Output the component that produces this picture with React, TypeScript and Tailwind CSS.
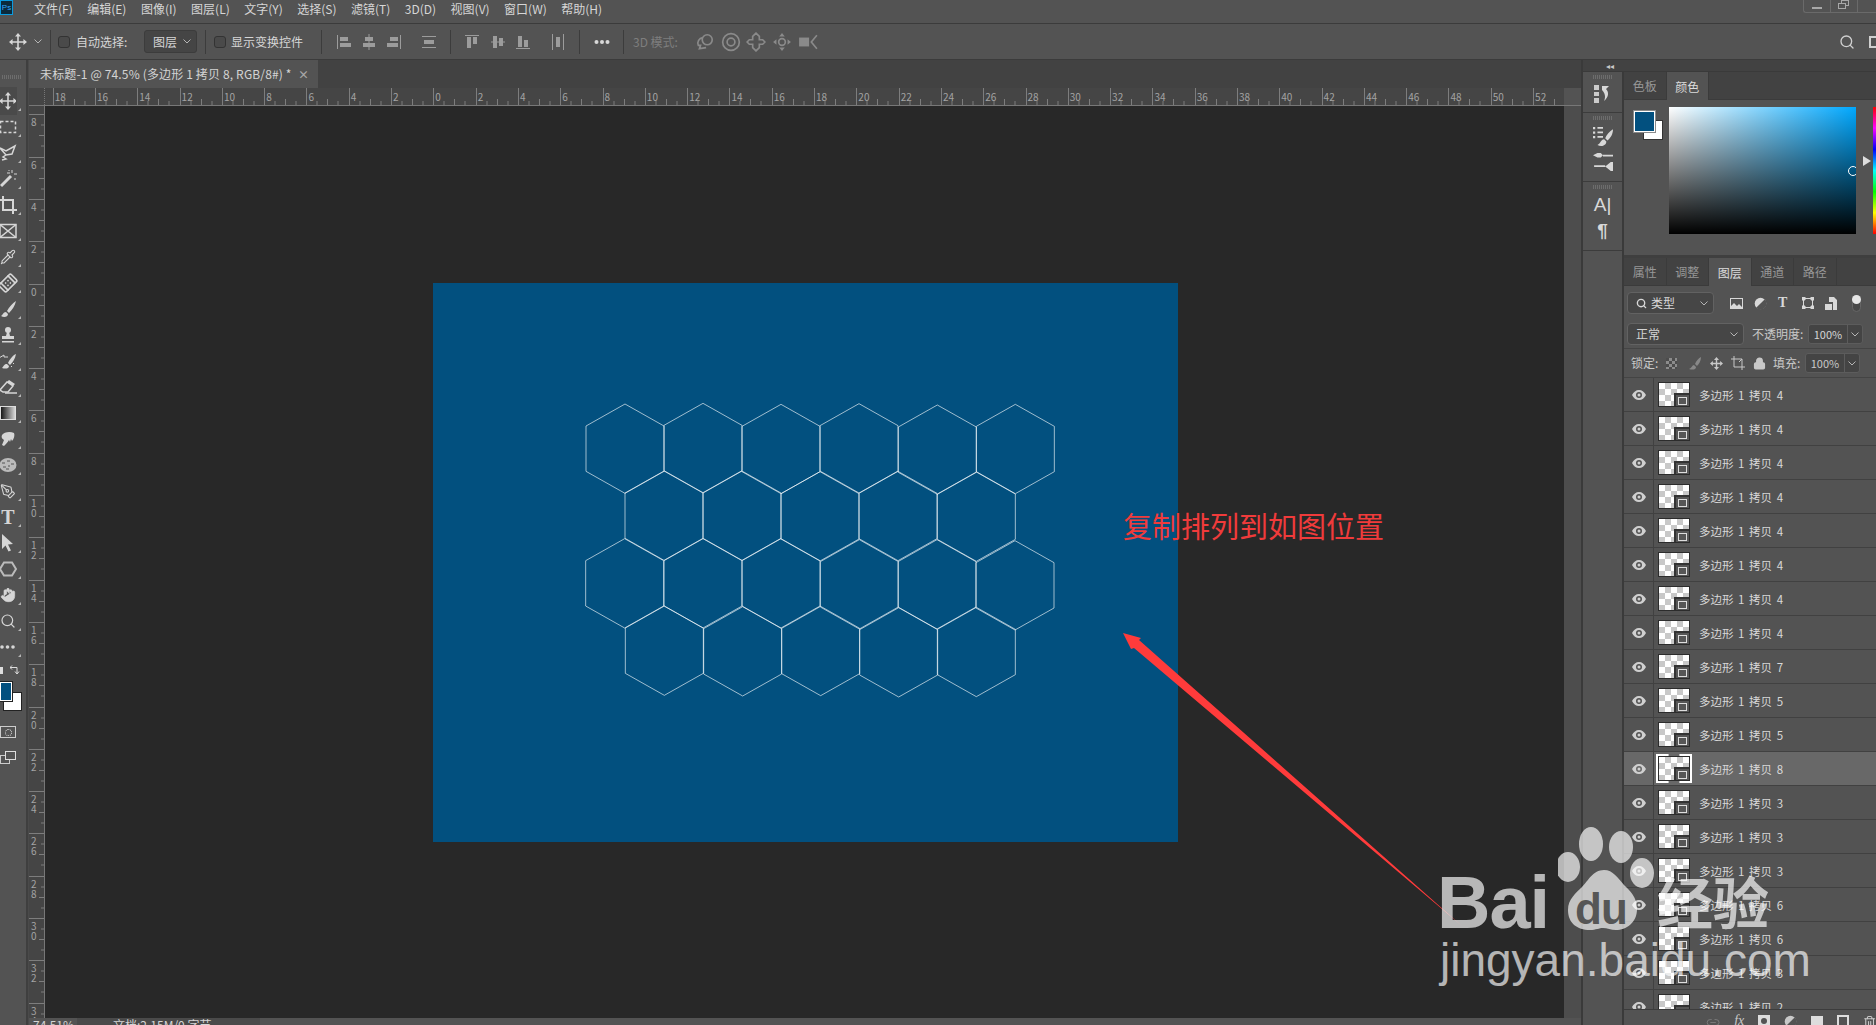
import type { ReactNode } from "react";
import { Bandage, Hand, Lock, PenTool, Pipette, Search, Trash2, Link2 } from "lucide-react";

const menus = ["文件(F)", "编辑(E)", "图像(I)", "图层(L)", "文字(Y)", "选择(S)", "滤镜(T)", "3D(D)", "视图(V)", "窗口(W)", "帮助(H)"];
const rulerTop = [18, 16, 14, 12, 10, 8, 6, 4, 2, 0, 2, 4, 6, 8, 10, 12, 14, 16, 18, 20, 22, 24, 26, 28, 30, 32, 34, 36, 38, 40, 42, 44, 46, 48, 50, 52];
const rulerLeft = [8, 6, 4, 2, 0, 2, 4, 6, 8, 10, 12, 14, 16, 18, 20, 22, 24, 26, 28, 30, 32, 34];
const layers = ["4", "4", "4", "4", "4", "4", "4", "4", "7", "5", "5", "8", "3", "3", "3", "6", "6", "3", "2"];

// vertex coordinates read off the reference, in 3x space
const hexTops = [
    [165, 42], [399, 40], [633, 43], [867, 41], [1102, 45], [1336, 43],
    [282, 243], [516, 243], [750, 245], [984, 244], [1219, 246],
    [164, 446], [399, 446], [633, 446], [868, 449], [1101, 449], [1335, 452],
    [283, 648], [518, 650], [752, 649], [986, 653], [1219, 652],
];

function Ico({ size = 18, box = 18, children }: { size?: number; box?: number; children: ReactNode }) {
    return (
        <svg width={size} height={size} viewBox={`0 0 ${box} ${box}`} fill="currentColor" className="shrink-0">
            {children}
        </svg>
    );
}

function MoveIcon() {
    return (
        <Ico>
            <path d="M9 3v12M3 9h12" stroke="currentColor" strokeWidth="1.6" fill="none" />
            <path d="M9 0l3 3.6H6zM9 18l3-3.6H6zM0 9l3.6-3v6zM18 9l-3.6-3v6z" />
        </Ico>
    );
}

const stroke = { fill: "none", stroke: "currentColor", strokeWidth: 1.5 };

const tools: ReactNode[] = [
    <MoveIcon />,
    <Ico><rect x="1.5" y="3.5" width="15" height="11" {...stroke} strokeDasharray="3 2" /></Ico>,
    <Ico><path d="M1 4l6 3 9-5-3 8-6 1zM7 11l-3 2 3 2-4 1" {...stroke} /></Ico>,
    <Ico><path d="M2 16L12 6" stroke="currentColor" strokeWidth="3" /><path d="M13 0v3M15 4h3M8 3h3M16 8v2M10 0v1" stroke="currentColor" strokeWidth="1" /></Ico>,
    <Ico><path d="M4 0v14h14M1 4h13v14" stroke="currentColor" strokeWidth="2" fill="none" /></Ico>,
    <Ico><rect x="1" y="2.5" width="16" height="13" {...stroke} /><path d="M1 2.5l16 13M17 2.5l-16 13" {...stroke} /></Ico>,
    <Pipette size={18} strokeWidth={1.6} />,
    <Bandage size={20} strokeWidth={2} className="-rotate-45 shrink-0" />,
    <Ico><path d="M17 1c-3 2-7 6-9 10l2 2c3-3 6-7 7-12zM7 12c-3 0-3 3-5 4 3 2 7 1 7-2z" /></Ico>,
    <Ico><circle cx="9" cy="4" r="3" /><path d="M8 6h2l1 4h4v3H3v-3h4zM3 15h12v1.5H3z" /></Ico>,
    <Ico><path d="M17 2c-3 1-6 5-8 9l2 2c3-3 5-6 6-11zM8 12c-3 0-3 2-5 4 3 1 7 1 7-2z" /><path d="M0 6l5-3v2h4M14 11l1 1M12 14l1 1" stroke="currentColor" strokeWidth="1" fill="none" /></Ico>,
    <Ico><path d="M1 12l7-8 6 4-5 6H4z" {...stroke} /><path d="M8 4l2-2 6 4-2 2z" /><path d="M6 15h12" stroke="currentColor" strokeWidth="1.5" /></Ico>,
    <svg width="16" height="14" viewBox="0 0 16 14" className="shrink-0">
        <defs>
            <linearGradient id="toolGrad">
                <stop offset="0" stopColor="#111" />
                <stop offset="1" stopColor="#ddd" />
            </linearGradient>
        </defs>
        <rect x="0.5" y="0.5" width="15" height="13" fill="url(#toolGrad)" stroke="#ddd" />
    </svg>,
    <Ico><path d="M3 5c2-3 8-4 12-2 1 2 0 6-2 8l-1-2-1 3-1-2c-1 2-3 4-5 6l-2-1 2-5C3 9 2 7 3 5z" /></Ico>,
    <Ico><ellipse cx="9" cy="9" rx="8.500" ry="7" fill="currentColor" opacity="0.8" /><path d="M3 7h3M8 5h3M12 8h3M4 11h3M9 10h2M7 13h3" stroke="#555" strokeWidth="1" /></Ico>,
    <PenTool size={17} strokeWidth={1.6} />,
    <span className="font-['Liberation_Serif',serif] font-bold text-[20px] leading-none">T</span>,
    <Ico><path d="M3 0l11 10-5 .5 3 6-2.5 1-3-6L3 15z" /></Ico>,
    <Ico><path d="M5 2.5h8L17 9l-4 6.5H5L1 9z" stroke="currentColor" strokeWidth="2" fill="none" opacity="0.8" /></Ico>,
    <Hand size={18} fill="currentColor" strokeWidth={1} />,
    <Search size={18} strokeWidth={1.8} />,
    <Ico><circle cx="3" cy="9" r="1.8" /><circle cx="8.5" cy="9" r="1.8" /><circle cx="14" cy="9" r="1.8" /></Ico>,
];

function AlignBar({ d }: { d: string }) {
    return (
        <svg width="14" height="18" viewBox="0 0 14 18" className="shrink-0 text-[#9c9c9c]" fill="currentColor">
            <path d={d} />
        </svg>
    );
}

function Sep({ className }: { className: string }) {
    return <div className={`w-px h-[24px] bg-[#3c3c3c] shrink-0 ${className}`} />;
}

function Chevron() {
    return (
        <svg width="8" height="5" viewBox="0 0 8 5" className="shrink-0 text-[#b5b5b5]" fill="none" stroke="currentColor">
            <path d="M.5.5L4 4 7.5.5" />
        </svg>
    );
}

function OptionsBar() {
    return (
        <div className="h-[36px] flex items-center bg-[#535353] border-b border-[#3b3b3b] text-[12px] text-[#d6d6d6] overflow-hidden">
            <div className="ml-[9px] text-[#d8d8d8]"><MoveIcon /></div>
            <div className="ml-[7px]"><Chevron /></div>
            <Sep className="ml-[8px]" />
            <div className="ml-[7px] w-[12px] h-[12px] rounded-[3px] border border-[#333] bg-[#4a4a4a] shrink-0" />
            <span className="ml-[6px] w-[54px] shrink-0">自动选择:</span>
            <div className="ml-[14px] w-[53px] h-[23px] rounded-[3px] border border-[#3c3c3c] bg-[#454545] flex items-center justify-between pl-[8px] pr-[5px] shrink-0">
                <span>图层</span>
                <Chevron />
            </div>
            <Sep className="ml-[8px]" />
            <div className="ml-[8px] w-[12px] h-[12px] rounded-[3px] border border-[#333] bg-[#4a4a4a] shrink-0" />
            <span className="ml-[5px] w-[72px] shrink-0">显示变换控件</span>
            <Sep className="ml-[18px]" />
            <div className="ml-[15px]"><AlignBar d="M0 2h1v14H0zM3 4h8v4H3zM3 10h11v4H3z" /></div>
            <div className="ml-[11px]"><AlignBar d="M6.5 1h1v16h-1zM3 4h8v4H3zM1 10h12v4H1z" /></div>
            <div className="ml-[11px]"><AlignBar d="M13 2h1v14h-1zM3 4h8v4H3zM0 10h11v4H0z" /></div>
            <div className="ml-[21px]"><AlignBar d="M0 3h14v1H0zM0 14h14v1H0zM2 7h10v4H2z" /></div>
            <Sep className="ml-[14px]" />
            <div className="ml-[14px]"><AlignBar d="M0 2h14v1H0zM2 4h4v11H2zM8 4h4v7H8z" /></div>
            <div className="ml-[12px]"><AlignBar d="M0 8.5h14v1H0zM2 3h4v12H2zM8 5h4v8H8z" /></div>
            <div className="ml-[11px]"><AlignBar d="M0 15h14v1H0zM2 3h4v11H2zM8 7h4v7H8z" /></div>
            <div className="ml-[21px]"><AlignBar d="M1 1h1v16H1zM12 1h1v16h-1zM5 4h4v10H5z" /></div>
            <Sep className="ml-[14px]" />
            <svg width="16" height="6" viewBox="0 0 16 6" className="ml-[14px] shrink-0 text-[#d8d8d8]" fill="currentColor">
                <circle cx="2.5" cy="3" r="2" /><circle cx="8" cy="3" r="2" /><circle cx="13.5" cy="3" r="2" />
            </svg>
            <Sep className="ml-[13px]" />
            <span className="ml-[9px] w-[47px] shrink-0 text-[#7e7e7e] whitespace-nowrap">3D 模式:</span>
            <div className="ml-[15px] text-[#8a8a8a] flex items-center">
                <Ico size={20}><circle cx="11" cy="7" r="4.5" {...stroke} /><path d="M7 5a5 5 0 0 0-4 7h2l-1 3 6-1" {...stroke} /></Ico>
                <div className="ml-[6px]"><Ico size={20}><circle cx="9" cy="9" r="7.5" {...stroke} /><circle cx="9" cy="9" r="3.5" {...stroke} /></Ico></div>
                <div className="ml-[5px]"><Ico size={20}><path d="M9 1l3 3v3h3l2 2-2 2h-3v3l-3 3-3-3v-3H3L1 9l2-2h3V4z" {...stroke} /></Ico></div>
                <div className="ml-[6px]"><Ico size={20}><path d="M9 1l2.5 3h-5zM9 17l2.5-3h-5zM1 9l3-2.5v5zM17 9l-3-2.5v5z" /><circle cx="9" cy="9" r="3" {...stroke} /></Ico></div>
                <div className="ml-[6px]"><Ico size={20}><rect x="1" y="5" width="9" height="8" /><path d="M17 3l-5 6 5 6" {...stroke} /></Ico></div>
            </div>
            <div className="ml-auto flex items-center text-[#d0d0d0]">
                <Search size={16} strokeWidth={2} />
                <div className="ml-[14px] w-[12px] h-[12px] mr-[-5px] border-2 border-[#d0d0d0] shrink-0" />
            </div>
        </div>
    );
}

function RulerTicks({ vertical }: { vertical?: boolean }) {
    // one 42.3px division: long line, three short marks
    return vertical ? (
        <svg width="16" height="42.3" className="absolute left-0 top-0">
            <path d="M0 .5H16M12 11H16M10 21.5H16M12 32H16" stroke="#7d7d7d" fill="none" />
        </svg>
    ) : (
        <svg width="42.3" height="17" className="absolute left-0 top-0">
            <path d="M.5 0V17M11 13V17M21.5 11V17M32 13V17" stroke="#7d7d7d" fill="none" />
        </svg>
    );
}

function TopRuler() {
    return (
        <div className="h-[18px] flex bg-[#454545] border-b border-[#777] overflow-hidden">
            <div className="w-[16px] shrink-0 border-r border-[#777] border-dotted" />
            <div className="w-[1519px] flex overflow-hidden pl-[7.7px] shrink-0">
                {rulerTop.map((n, i) => (
                    <div key={i} className="relative w-[42.3px] h-[17px] shrink-0 pl-[2px] text-[10px] leading-[18px] text-[#a3a3a3]">
                        <RulerTicks />
                        {n}
                    </div>
                ))}
            </div>
            <div className="flex-1 bg-[#535353]" />
        </div>
    );
}

function LeftRuler() {
    return (
        <div className="w-[16px] shrink-0 bg-[#454545] border-r border-[#777] overflow-hidden pt-[8.4px]">
            {rulerLeft.map((n, i) => (
                <div key={i} className="relative h-[42.3px] pt-[3px] pl-[2px] text-[10px] leading-[10px] text-[#a3a3a3]">
                    <RulerTicks vertical />
                    {String(n).split("").map((c, j) => <div key={j}>{c}</div>)}
                </div>
            ))}
        </div>
    );
}

function Toolbar() {
    return (
        <div className="w-[26px] shrink-0 bg-[#535353] flex flex-col overflow-hidden text-[#d6d6d6]">
            <div className="h-[28px] shrink-0 pt-[15px] pl-[2px]">
                <div className="h-[4px] w-[20px] bg-[repeating-linear-gradient(to_right,#6d6d6d_0_1px,transparent_1px_2px)]" />
            </div>
            {tools.map((icon, i) => (
                <div key={i} className={`relative h-[26px] flex items-center w-[16px] justify-center shrink-0 ${i === 0 ? "bg-[#4a4a4a] outline outline-[#4a4a4a]" : ""}`}>
                    {icon}
                    <span className="absolute left-[18px] bottom-[3px] w-0 h-0 border-l-[3px] border-l-transparent border-b-[3px] border-b-[#b5b5b5]" />
                </div>
            ))}
            <div className="relative h-[66px] shrink-0">
                <span className="absolute left-0 top-[7px] w-[3px] h-[7px] bg-[#ddd]" />
                <svg width="10" height="10" viewBox="0 0 10 10" className="absolute left-[10px] top-[5px]" fill="none" stroke="#ddd">
                    <path d="M0 2.500h7v6M5 6.500l2 2.500 2-2.500M2 .5L0 2.500l2 2" />
                </svg>
                <span className="absolute left-[3px] top-[32px] w-[19px] h-[19px] bg-white border border-[#222]" />
                <span className="absolute left-0 top-[22px] w-[12px] h-[19px] bg-[#02507f] border border-white outline outline-[#222]" />
            </div>
            <div className="h-[25px] shrink-0 flex items-start">
                <div className="w-[16px] h-[12px] border border-[#ccc] flex items-center justify-center">
                    <span className="w-[7px] h-[7px] rounded-full border border-dotted border-[#ddd]" />
                </div>
            </div>
            <div className="relative h-[16px] shrink-0">
                <span className="absolute left-0 top-[4px] w-[10px] h-[9px] border border-[#ccc]" />
                <span className="absolute left-[5px] top-0 w-[11px] h-[9px] border border-[#ddd] bg-[#535353]" />
            </div>
        </div>
    );
}

function Canvas() {
    return (
        <div className="w-[1519px] shrink-0 bg-[#282828] flex items-center justify-center pl-[2px] pt-px">
            <div className="w-[745px] h-[559px] bg-[#02507f] pl-[137px] pt-[107px]">
                <svg width="500" height="320" viewBox="0 0 1500 960" fill="none">
                    {hexTops.map(([x, y], i) => (
                        <polygon
                            key={i}
                            points={`${x},${y} ${x + 117},${y + 66} ${x + 117},${y + 202} ${x},${y + 268} ${x - 117},${y + 202} ${x - 117},${y + 66}`}
                            stroke="#ffffff"
                            strokeOpacity="0.72"
                            strokeWidth="2.6"
                        />
                    ))}
                </svg>
            </div>
        </div>
    );
}

function Document() {
    return (
        <div className="w-[1552px] shrink-0 flex flex-col">
            <div className="h-[28px] flex bg-[#424242]">
                <div className="w-[289px] bg-[#535353] flex items-center pl-[11px] pr-[9px] justify-between text-[12px] text-[#d4d4d4] whitespace-nowrap">
                    <span className="tracking-[0.15px]">未标题-1 @ 74.5% (多边形 1 拷贝 8, RGB/8#) *</span>
                    <span className="text-[#a8a8a8] text-[11px] font-bold">×</span>
                </div>
            </div>
            <TopRuler />
            <div className="flex-1 flex min-h-0">
                <LeftRuler />
                <Canvas />
                <div className="flex-1 bg-[#4d4d4d]" />
            </div>
            <div className="h-[7px] flex overflow-hidden text-[12px] leading-[14px] text-[#d4d4d4]">
                <div className="w-[48px] bg-[#535353] pl-[4px]">74.51%</div>
                <div className="w-[183px] bg-[#4a4a4a] pl-[36px] whitespace-nowrap">文档:2.15M/0 字节</div>
                <div className="flex-1 bg-[#535353]" />
            </div>
        </div>
    );
}

function Dock() {
    const Grip = () => <div className="h-[4px] w-[19px] mx-auto mt-[3px] bg-[repeating-linear-gradient(to_right,#6d6d6d_0_1px,transparent_1px_2px)]" />;
    return (
        <div className="w-[39px] shrink-0 flex flex-col text-[#d8d8d8]">
            <div className="h-[41px] border-b border-[#3c3c3c] flex flex-col items-center">
                <Grip />
                <div className="mt-[6px]">
                    <Ico size={18}>
                        <path d="M0 0h5v5H0zM0 7h5v4H0zM0 13h5v5H0z" opacity="0.9" />
                        <path d="M8 1h7l-3 3c3 3 3 8-2 12 2-4 1-8-2-11z" />
                    </Ico>
                </div>
            </div>
            <div className="h-[69px] border-b border-[#3c3c3c] flex flex-col items-center">
                <Grip />
                <div className="mt-[6px]">
                    <Ico size={20}>
                        <path d="M0 1h2v2H0zM4 1h5v1.5H4zM0 5h2v2H0zM4 5h5v1.5H4zM0 9h2v2H0zM4 9h5v1.5H4z" />
                        <path d="M18 3c-3 2-6 5-7 8l2 2c3-2 5-6 5-10zM10 12c-3 0-3 4-6 5 3 2 8 1 8-3z" />
                    </Ico>
                </div>
                <div className="mt-[6px]">
                    <Ico size={20}>
                        <path d="M0 3l4-2h3l2 2-2 2H4zM9 2.5h10V4H9zM1 12h10v1.5H1zM11 13l5-4h3v8h-3z" />
                    </Ico>
                </div>
            </div>
            <div className="h-[69px] border-b border-[#3c3c3c] flex flex-col items-center">
                <Grip />
                <span className="mt-[3px] text-[19px] leading-[26px] font-['Liberation_Sans',sans-serif]">A<span className="font-normal text-[#ddd]">|</span></span>
                <span className="mt-[1px] text-[19px] leading-[24px] font-['Liberation_Sans',sans-serif] font-bold">¶</span>
            </div>
        </div>
    );
}

function TabStrip({ tabs, active }: { tabs: string[]; active: string }) {
    return (
        <div className="h-[28px] shrink-0 flex bg-[#424242] text-[12px] border-b border-[#3b3b3b]">
            {tabs.map(t => (
                <div
                    key={t}
                    className={`w-[42.5px] flex items-center justify-center pt-[1px] border-r border-[#3b3b3b] ${t === active ? "bg-[#535353] text-[#dcdcdc] -mb-px" : "text-[#979797]"}`}
                >
                    {t}
                </div>
            ))}
        </div>
    );
}

function ColorPanel() {
    return (
        <div className="h-[186px] shrink-0 flex flex-col border-b-[3px] border-[#3f3f3f]">
            <TabStrip tabs={["色板", "颜色"]} active="颜色" />
            <div className="flex pl-[10px] pt-[7px]">
                <div className="relative w-[29px] h-[32px] mt-[4px] shrink-0">
                    <span className="absolute left-[9px] top-[9px] w-[20px] h-[20px] bg-white border border-[#333]" />
                    <span className="absolute left-0 top-0 w-[21px] h-[21px] bg-[#02507f] border border-white outline outline-[#8a8a8a]" />
                </div>
                <div className="relative ml-[6px] w-[187px] h-[127px] shrink-0 overflow-hidden bg-[linear-gradient(to_bottom,transparent,#000),linear-gradient(to_right,#fff,#00a8ff)]">
                    <span className="absolute left-[179px] top-[59px] w-[10px] h-[10px] rounded-full border border-white" />
                </div>
                <div className="relative ml-[17px] w-[4px] h-[127px] shrink-0 bg-[linear-gradient(to_bottom,#f00,#f0f,#00f,#0ff,#0f0,#ff0,#f00)]">
                    <span className="absolute -left-[10px] top-[49px] w-0 h-0 border-l-[8px] border-l-[#ddd] border-y-[5px] border-y-transparent" />
                </div>
            </div>
        </div>
    );
}

function SelectBox({ w, label, icon }: { w: string; label: string; icon?: ReactNode }) {
    return (
        <div className={`${w} rounded-[4px] border border-[#626262] bg-[#464646] flex items-center justify-between pl-[8px] pr-[5px] shrink-0`}>
            <span className="flex items-center gap-[4px]">{icon}{label}</span>
            <Chevron />
        </div>
    );
}

function PercentBox() {
    return (
        <div className="w-[55px] h-[20px] ml-[4px] rounded-[3px] border border-[#5c5c5c] bg-[#444] flex shrink-0 items-center">
            <span className="w-[39px] text-center text-[11px] border-r border-[#5c5c5c] h-full leading-[18px]">100%</span>
            <span className="flex-1 flex justify-center"><Chevron /></span>
        </div>
    );
}

function LayerThumb({ selected }: { selected: boolean }) {
    return (
        <div className="relative w-[32px] h-[25px] shrink-0 border border-[#2c2c2c] bg-[repeating-conic-gradient(#c8c8c8_0_25%,#ffffff_0_50%)] bg-[length:12px_12px]">
            <span className="absolute right-0 bottom-0 w-[15px] h-[13px] border-l-2 border-t-2 border-[#333] bg-[#565656] flex items-center justify-center">
                <span className="w-[9px] h-[8px] border border-[#ddd]" />
            </span>
            {selected && <span className="absolute -inset-[3px] border-2 border-white [clip-path:polygon(0_0,35%_0,35%_100%,65%_100%,65%_0,100%_0,100%_100%,0_100%)]" />}
        </div>
    );
}

function EyeIcon() {
    return (
        <svg width="14" height="10" viewBox="0 0 14 10" fill="#d0d0d0" className="shrink-0">
            <path d="M7 0c3 0 5.500 2 7 5-1.500 3-4 5-7 5S1.500 8 0 5c1.500-3 4-5 7-5zm0 2a3 3 0 1 0 0 6 3 3 0 0 0 0-6z" />
            <circle cx="7" cy="5" r="1.500" />
        </svg>
    );
}

function LayersPanel() {
    return (
        <div className="flex-1 min-h-0 flex flex-col text-[12px] text-[#d4d4d4]">
            <TabStrip tabs={["属性", "调整", "图层", "通道", "路径"]} active="图层" />
            <div className="h-[34px] shrink-0 flex items-center pl-[3px] text-[#d8d8d8]">
                <SelectBox w="w-[87px] h-[22px]" label="类型" icon={<Search size={11} strokeWidth={3} />} />
                <div className="ml-[16px] flex items-center gap-[11px]">
                    <svg width="13" height="11" viewBox="0 0 13 11" fill="currentColor"><path d="M0 0h13v11H0zM1 1v7l3-3 3 3 2-2 3 3V1z" /></svg>
                    <Ico size={13}><circle cx="9" cy="9" r="8" /><path d="M3 15L15 3A8 8 0 0 1 3 15z" fill="#535353" /></Ico>
                    <span className="font-['Liberation_Serif',serif] font-bold text-[14px] leading-none w-[13px]">T</span>
                    <svg width="12" height="12" viewBox="0 0 12 12" fill="none" stroke="currentColor"><rect x="1.500" y="1.500" width="9" height="9" /><path d="M0 0h3v3H0zM9 0h3v3H9zM0 9h3v3H0zM9 9h3v3H9z" fill="currentColor" /></svg>
                    <svg width="12" height="13" viewBox="0 0 12 13" fill="currentColor"><path d="M4 0h5l3 3v10H8V5H4zM0 7h7v6H0z" /></svg>
                </div>
                <div className="relative ml-[15px] w-[9px] h-[17px] rounded-full border border-[#666] bg-[#484848]">
                    <span className="absolute -left-[1px] -top-[1px] w-[9px] h-[9px] rounded-full bg-[#e6e6e6]" />
                </div>
            </div>
            <div className="h-[29px] shrink-0 flex items-center pl-[3px] border-b border-[#444]">
                <SelectBox w="w-[117px] h-[22px]" label="正常" />
                <span className="ml-[8px] w-[52px] text-[#c8c8c8] whitespace-nowrap">不透明度:</span>
                <PercentBox />
            </div>
            <div className="h-[29px] shrink-0 flex items-center pl-[7px] border-b border-[#444] text-[#c8c8c8]">
                <span className="w-[30px] whitespace-nowrap">锁定:</span>
                <div className="ml-[5px] w-[11px] h-[11px] bg-[repeating-conic-gradient(#8c8c8c_0_25%,#4c4c4c_0_50%)] bg-[length:6px_6px]" />
                <svg width="13" height="13" viewBox="0 0 13 13" className="ml-[11px]" fill="#888"><path d="M13 0c-2 1-5 4-6 7l2 2c2-2 4-5 4-9zM6 8c-2 0-2 3-5 4 3 1 7 1 7-2z" /></svg>
                <div className="ml-[9px]"><Ico size={13}><path d="M9 3v12M3 9h12" stroke="currentColor" strokeWidth="2" fill="none" /><path d="M9 0l3.500 4h-7zM9 18l3.500-4h-7zM0 9l4-3.500v7zM18 9l-4-3.500v7z" /></Ico></div>
                <svg width="14" height="14" viewBox="0 0 14 14" className="ml-[8px]" fill="none" stroke="currentColor"><path d="M3 0v11h11M0 3h11v11" /><path d="M8 6l3-3" /></svg>
                <Lock size={13} strokeWidth={2.6} className="ml-[8px]" fill="currentColor" />
                <span className="ml-[7px] w-[28px] whitespace-nowrap">填充:</span>
                <PercentBox />
            </div>
            <div className="flex-1 min-h-0 overflow-hidden">
                {layers.map((n, i) => (
                    <div key={i} className={`h-[34px] flex items-center border-b border-[#414141] ${i === 11 ? "bg-[#686868]" : ""}`}>
                        <div className="w-[30px] h-full flex items-center justify-center border-r border-[#414141] shrink-0"><EyeIcon /></div>
                        <div className="ml-[4px]"><LayerThumb selected={i === 11} /></div>
                        <span className="ml-[9px] pt-[2px] text-[11.5px] whitespace-pre [word-spacing:2px] text-[#d8d8d8]">多边形 1 拷贝 {n}</span>
                    </div>
                ))}
            </div>
            <div className="h-[16px] shrink-0 border-t border-[#3c3c3c] overflow-hidden pt-[5px] relative text-[#c8c8c8]">
                <div className="flex items-start pl-[82px]">
                    <Link2 size={15} strokeWidth={1.6} className="text-[#7a7a7a]" />
                    <span className="ml-[14px] font-['Liberation_Serif',serif] italic text-[14px] leading-[12px] w-[12px]">fx</span>
                    <span className="ml-[12px] w-[13px] h-[12px] bg-[#ddd] flex items-center justify-center"><span className="w-[6px] h-[6px] rounded-full bg-[#535353]" /></span>
                    <div className="ml-[14px]"><Ico size={13}><circle cx="9" cy="9" r="8" /><path d="M3 15L15 3A8 8 0 0 1 3 15z" fill="#535353" /></Ico></div>
                    <span className="ml-[14px] w-[13px] h-[11px] mt-[1px] bg-[#ddd]" />
                    <span className="ml-[14px] w-[12px] h-[12px] border-2 border-[#ddd]" />
                    <Trash2 size={14} className="ml-[14px]" />
                </div>
            </div>
        </div>
    );
}

function Watermark() {
    return (
        <div className="absolute left-[1430px] top-[820px] w-[360px] h-[170px] pointer-events-none text-[#ffffffaa] font-['Liberation_Sans',sans-serif]">
            <span className="absolute left-[7px] top-[46px] text-[74px] leading-none font-bold tracking-[-1px]">Bai</span>
            <svg width="100" height="116" viewBox="0 0 100 116" className="absolute left-[128px] top-[3px]" fill="currentColor">
                <ellipse cx="33" cy="21" rx="12" ry="17" />
                <ellipse cx="63" cy="24" rx="12" ry="16" />
                <ellipse cx="10" cy="44" rx="12" ry="15" />
                <ellipse cx="84" cy="50" rx="12" ry="15" />
                <path d="M46 47c9 0 14 8 20 15 6 6 13 12 13 24 0 14-11 21-21 21-5 0-9-2-13-2s-7 2-13 2c-13 0-22-7-22-20 0-11 8-17 14-23s11-17 22-17z" />
            </svg>
            <span className="absolute left-[145px] top-[67px] text-[44px] leading-none font-bold text-[#3d3d3dd0] tracking-[-1px]">du</span>
            <span className="absolute left-[227px] top-[52px] text-[56px] leading-none font-bold font-['Noto_Sans_CJK_SC',sans-serif]">经验</span>
            <span className="absolute left-[10px] top-[117px] text-[46px] leading-none whitespace-nowrap">jingyan.baidu.com</span>
        </div>
    );
}

export default function App() {
    return (
        <div className="relative w-[1876px] h-[1025px] overflow-hidden flex flex-col bg-[#535353] font-['Noto_Sans_CJK_SC','Liberation_Sans',sans-serif]">
            <div className="h-[24px] shrink-0 flex items-center border-b border-[#3b3b3b] text-[12px] text-[#d6d6d6] relative">
                <div className="w-[13px] h-[15px] -mt-[8px] border border-[#0a9be0] bg-[#0b2a3c] text-[#31a8ff] text-[8px] leading-[13px] text-center font-['Liberation_Sans',sans-serif] shrink-0">Ps</div>
                <div className="ml-[21px] flex gap-[14.5px] -mt-[5px]">
                    {menus.map(m => <span key={m}>{m}</span>)}
                </div>
                <div className="absolute right-0 top-0 h-[13px] w-[73px] flex border-l border-b border-[#6a6a6a] rounded-bl-[3px]">
                    <div className="w-[27px] border-r border-[#6a6a6a] flex items-center justify-center"><span className="w-[10px] h-[2px] bg-[#a8a8a8] mt-[4px]" /></div>
                    <div className="relative w-[27px] border-r border-[#6a6a6a]">
                        <span className="absolute left-[10px] top-0 w-[8px] h-[6px] border border-[#a8a8a8]" />
                        <span className="absolute left-[7px] top-[3px] w-[8px] h-[6px] border border-[#a8a8a8] bg-[#535353]" />
                    </div>
                </div>
            </div>
            <OptionsBar />
            <div className="flex-1 min-h-0 flex">
                <Toolbar />
                <div className="w-[3px] shrink-0 bg-[#3f3f3f] border-r border-[#4a4a4a]" />
                <Document />
                <div className="w-[2px] shrink-0 bg-[#3a3a3a]" />
                <div className="flex-1 flex flex-col min-w-0">
                    <div className="h-[12px] shrink-0 bg-[#424242] border-b border-[#3a3a3a] flex items-center pl-[23px] text-[#c8c8c8] text-[8px] leading-none">
                        <span>◂◂</span>
                    </div>
                    <div className="flex-1 min-h-0 flex">
                        <Dock />
                        <div className="w-[2px] shrink-0 bg-[#3a3a3a]" />
                        <div className="flex-1 min-w-0 flex flex-col">
                            <ColorPanel />
                            <LayersPanel />
                        </div>
                    </div>
                </div>
            </div>

            <span className="absolute left-[1123px] top-[503px] text-[29px] leading-[44px] text-[#f03b3b] whitespace-nowrap">复制排列到如图位置</span>
            <svg width="1876" height="1025" className="absolute inset-0 pointer-events-none" fill="#ff3b3b">
                <polygon points="1123,633 1141,638 1139,640 1462,926 1134,648 1131,649" />
            </svg>
            <Watermark />
        </div>
    );
}
